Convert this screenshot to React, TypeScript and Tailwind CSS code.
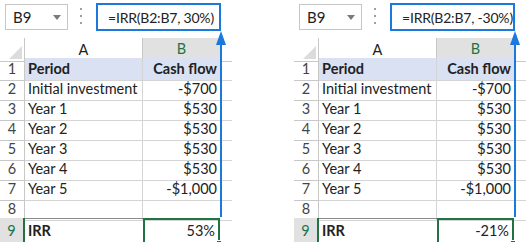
import React from 'react'

type Row = { n: number; a: string; b: string; head?: boolean }

const rows: Row[] = [
  { n: 1, a: 'Period', b: 'Cash flow', head: true },
  { n: 2, a: 'Initial investment', b: '-$700' },
  { n: 3, a: 'Year 1', b: '$530' },
  { n: 4, a: 'Year 2', b: '$530' },
  { n: 5, a: 'Year 3', b: '$530' },
  { n: 6, a: 'Year 4', b: '$530' },
  { n: 7, a: 'Year 5', b: '-$1,000' },
  { n: 8, a: '', b: '' },
]

const cellFont = { fontFamily: 'Lato, "Liberation Sans", sans-serif' }

function Sheet({ formula, result }: { formula: string; result: string }) {
  return (
    <div className="relative w-[232px] shrink-0 text-[14.5px] text-[#222]" style={cellFont}>
      {/* formula bar */}
      <div className="flex h-[38px] items-start pt-[3px]">
        <div className="ml-[5px] mt-[1px] flex h-[26px] w-[63px] items-center justify-between border border-[#c6c6c6] pl-[7px] pr-[6px] text-[15px]">
          <span>B9</span>
          <span className="h-0 w-0 border-x-[4px] border-t-[5px] border-x-transparent border-t-[#7a7a7a]" />
        </div>
        <div className="ml-[12px] mt-[5px] flex flex-col gap-[5px]">
          <span className="h-[2px] w-[2px] bg-[#a0a0a0]" />
          <span className="h-[2px] w-[2px] bg-[#a0a0a0]" />
          <span className="h-[2px] w-[2px] bg-[#a0a0a0]" />
        </div>
        <div className="ml-[14px] flex h-[28px] w-[125px] items-center whitespace-nowrap border-2 border-[#1b78dd] pl-[10px] text-[14px] tracking-[-0.2px]">
          {formula}
        </div>
      </div>

      {/* column headers */}
      <div className="grid h-[20px] grid-cols-[25px_118px_77px_1fr]">
        <div className="flex items-end justify-end border-r border-b border-[#c8c8c8] pr-[2px] pb-[2px]">
          <span className="h-0 w-0 border-b-[13px] border-l-[13px] border-b-[#dcdcdc] border-l-transparent" />
        </div>
        <div className="flex items-center justify-center border-r border-b border-[#c8c8c8]">A</div>
        <div className="flex items-center justify-center border-b-2 border-[#217346] bg-[#e1e1e1] text-[#217346]">B</div>
        <div className="border-b border-[#c8c8c8]" />
      </div>

      {/* rows */}
      {rows.map((r) => (
        <div key={r.n} className="grid h-[20px] grid-cols-[25px_118px_77px_1fr]">
          <div className="flex items-center justify-center border-r border-b border-[#c8c8c8] text-[#444]">{r.n}</div>
          <div className={`flex items-center border-r border-b border-[#d4d4d4] pl-[3px] ${r.head ? 'bg-[#d9e1f2] font-bold' : ''}`}>{r.a}</div>
          <div className={`flex items-center justify-end border-b border-[#d4d4d4] pr-[3px] ${r.head ? 'bg-[#d9e1f2] font-bold' : ''}`}>{r.b}</div>
          <div className="border-b border-[#d4d4d4]" />
        </div>
      ))}

      {/* row 9 */}
      <div className="grid h-[21px] grid-cols-[25px_118px_77px_1fr]">
        <div className="flex items-center justify-center border-r-2 border-b border-r-[#217346] border-b-[#c8c8c8] bg-[#e1e1e1] text-[#217346]">9</div>
        <div className="flex items-center border-t border-b border-[#8a8a8a] pl-[3px] font-bold">IRR</div>
        <div className="relative flex items-center justify-end border-2 border-[#217346] pr-[3px]">
          {result}
          <span className="absolute -right-[4px] -bottom-[4px] h-[6px] w-[6px] border border-white bg-[#217346]" />
        </div>
        <div className="border-b border-[#d4d4d4]" />
      </div>

      {/* arrow */}
      <div className="absolute left-[216px] top-[31px] flex flex-col items-center">
        <span className="h-0 w-0 border-x-[5px] border-b-[14px] border-x-transparent border-b-[#1b78dd]" />
        <span className="-mt-[1px] h-[173px] w-[2px] bg-[#1b78dd]" />
      </div>
    </div>
  )
}

export default function App() {
  return (
    <div className="flex h-[242px] w-[526px] overflow-hidden bg-white">
      <Sheet formula="=IRR(B2:B7, 30%)" result="53%" />
      <div className="ml-[62px]">
        <Sheet formula="=IRR(B2:B7, -30%)" result="-21%" />
      </div>
    </div>
  )
}
